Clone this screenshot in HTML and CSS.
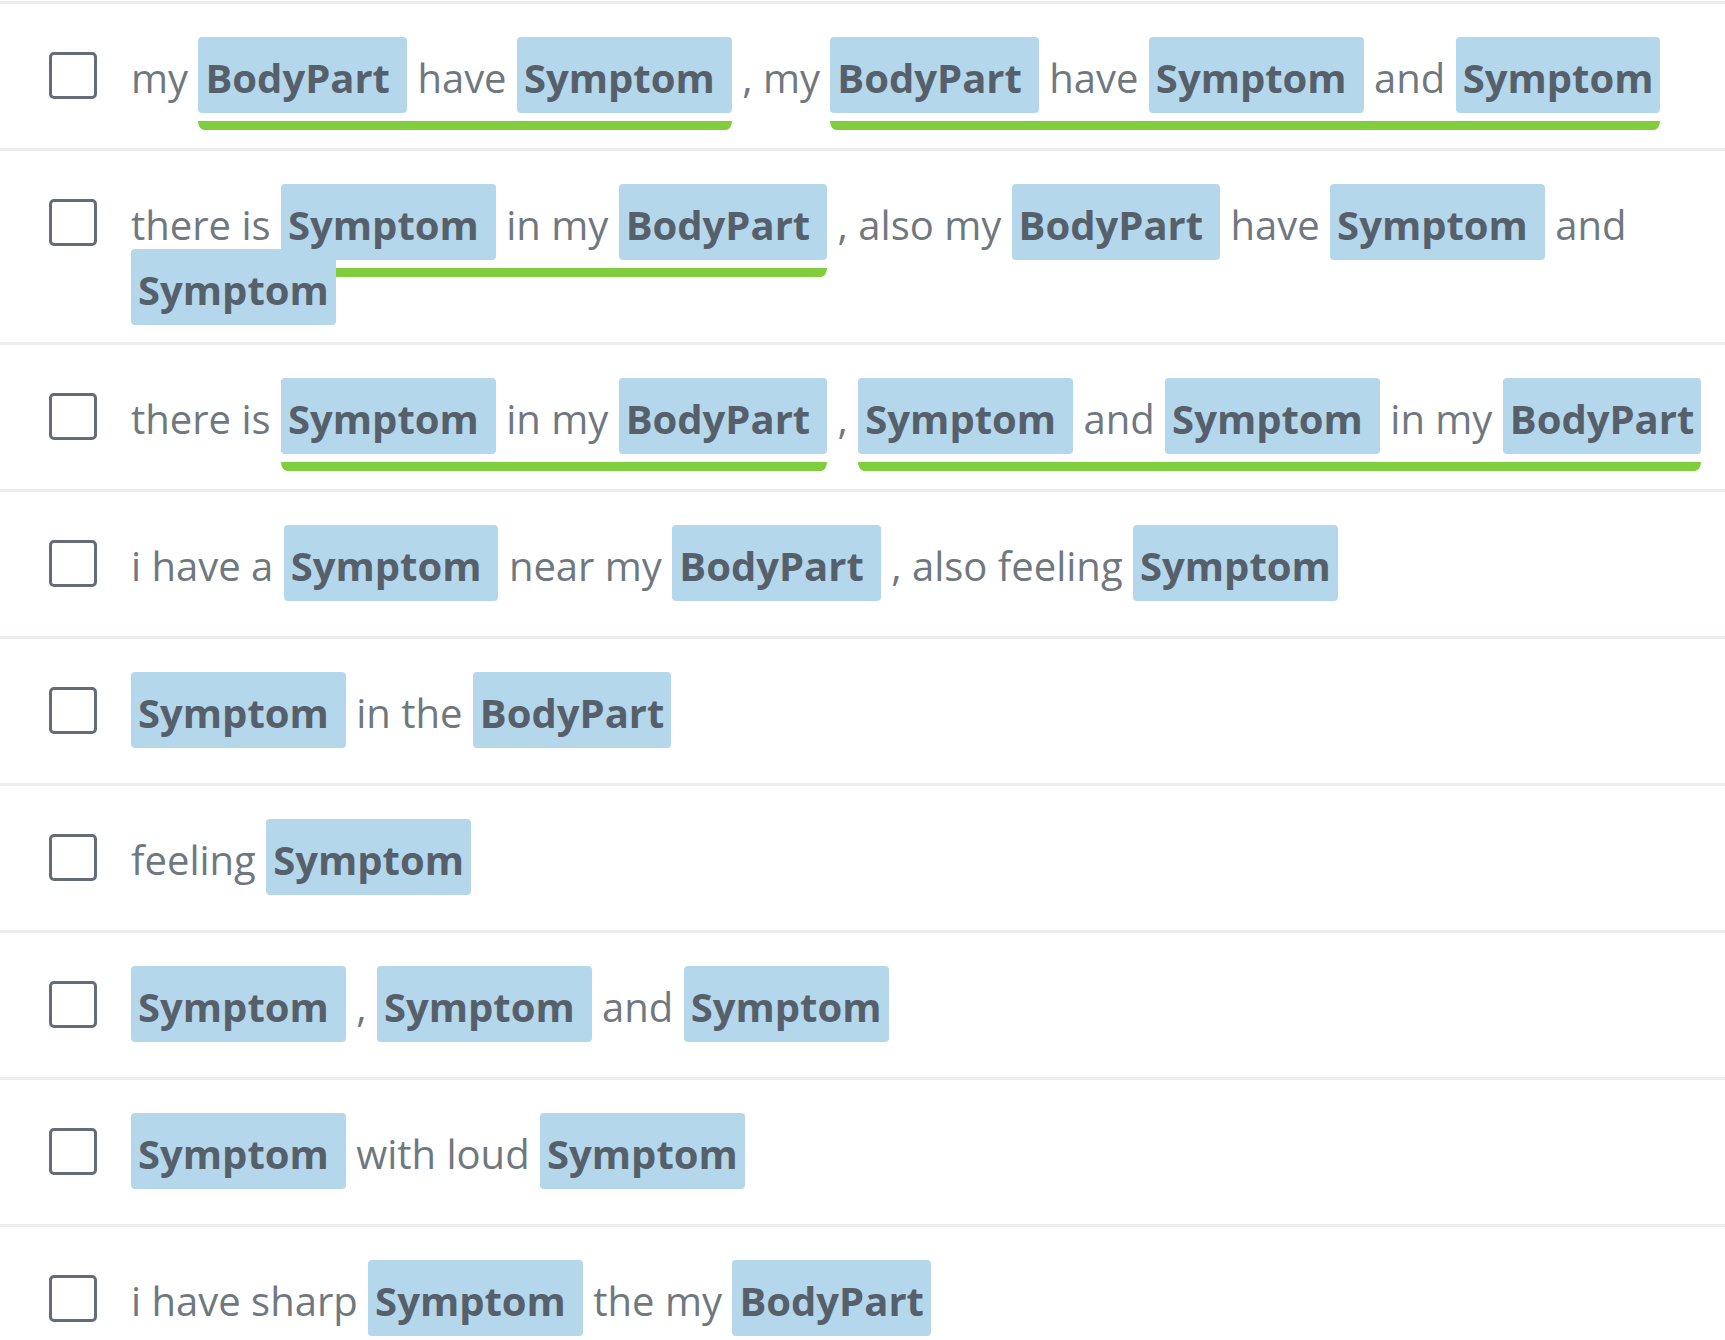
FILE: index.html
```html
<!DOCTYPE html>
<html lang="en">
<head>
<meta charset="utf-8">
<title>Training phrases</title>
<link rel="stylesheet" href="styles.css">
</head>
<body>
<ul class="list">
  <li class="row">
    <span class="check"></span>
    <p class="phrase">my <span class="group"><span class="chip">BodyPart</span> have <span class="chip">Symptom</span></span> , my <span class="group"><span class="chip">BodyPart</span> have <span class="chip">Symptom</span> and <span class="chip end">Symptom</span></span></p>
  </li>
  <li class="row">
    <span class="check"></span>
    <p class="phrase">there is <span class="group"><span class="chip">Symptom</span> in my <span class="chip">BodyPart</span></span> , also my <span class="chip">BodyPart</span> have <span class="chip">Symptom</span> and <span class="chip end">Symptom</span></p>
  </li>
  <li class="row">
    <span class="check"></span>
    <p class="phrase">there is <span class="group"><span class="chip">Symptom</span> in my <span class="chip">BodyPart</span></span> , <span class="group"><span class="chip">Symptom</span> and <span class="chip">Symptom</span> in my <span class="chip end">BodyPart</span></span></p>
  </li>
  <li class="row">
    <span class="check"></span>
    <p class="phrase">i have a <span class="chip">Symptom</span> near my <span class="chip">BodyPart</span> , also feeling <span class="chip end">Symptom</span></p>
  </li>
  <li class="row">
    <span class="check"></span>
    <p class="phrase"><span class="chip">Symptom</span> in the <span class="chip end">BodyPart</span></p>
  </li>
  <li class="row">
    <span class="check"></span>
    <p class="phrase">feeling <span class="chip end">Symptom</span></p>
  </li>
  <li class="row">
    <span class="check"></span>
    <p class="phrase"><span class="chip">Symptom</span> , <span class="chip">Symptom</span> and <span class="chip end">Symptom</span></p>
  </li>
  <li class="row">
    <span class="check"></span>
    <p class="phrase"><span class="chip">Symptom</span> with loud <span class="chip end">Symptom</span></p>
  </li>
  <li class="row">
    <span class="check"></span>
    <p class="phrase">i have sharp <span class="chip">Symptom</span> the my <span class="chip end">BodyPart</span></p>
  </li>
</ul>
</body>
</html>
```
FILE: styles.css
```css
html, body {
  margin: 0;
  padding: 0;
  background: #ffffff;
}

body {
  font-family: "Open Sans", "Noto Sans", "DejaVu Sans", sans-serif;
  overflow: hidden;
}

.list {
  list-style: none;
  margin: 1px 0 0 0;
  padding: 0;
}

.row {
  display: flex;
  align-items: flex-start;
  gap: 34px;
  box-sizing: border-box;
  min-height: 147px;
  padding: 41px 0 20px 49px;
  border-top: 3px solid #eceeec;
}

.check {
  flex: none;
  box-sizing: border-box;
  width: 48px;
  height: 47px;
  margin-top: 7px;
  border: 3px solid #636d78;
  border-radius: 5px;
  background: #ffffff;
}

.phrase {
  flex: 1;
  margin: 0;
  font-size: 40px;
  line-height: 65px;
  color: #6f787f;
  white-space: normal;
}

.chip {
  background: #b5d7eb;
  color: #56606b;
  font-weight: 700;
  padding: 13px 17px 8px 7px;
  border-radius: 4px;
}

.chip.end {
  padding-right: 7px;
}

.group {
  padding-bottom: 16px;
  border-bottom: 9px solid #80cd3e;
  border-radius: 0 0 6px 6px / 0 0 9px 9px;
}
```
